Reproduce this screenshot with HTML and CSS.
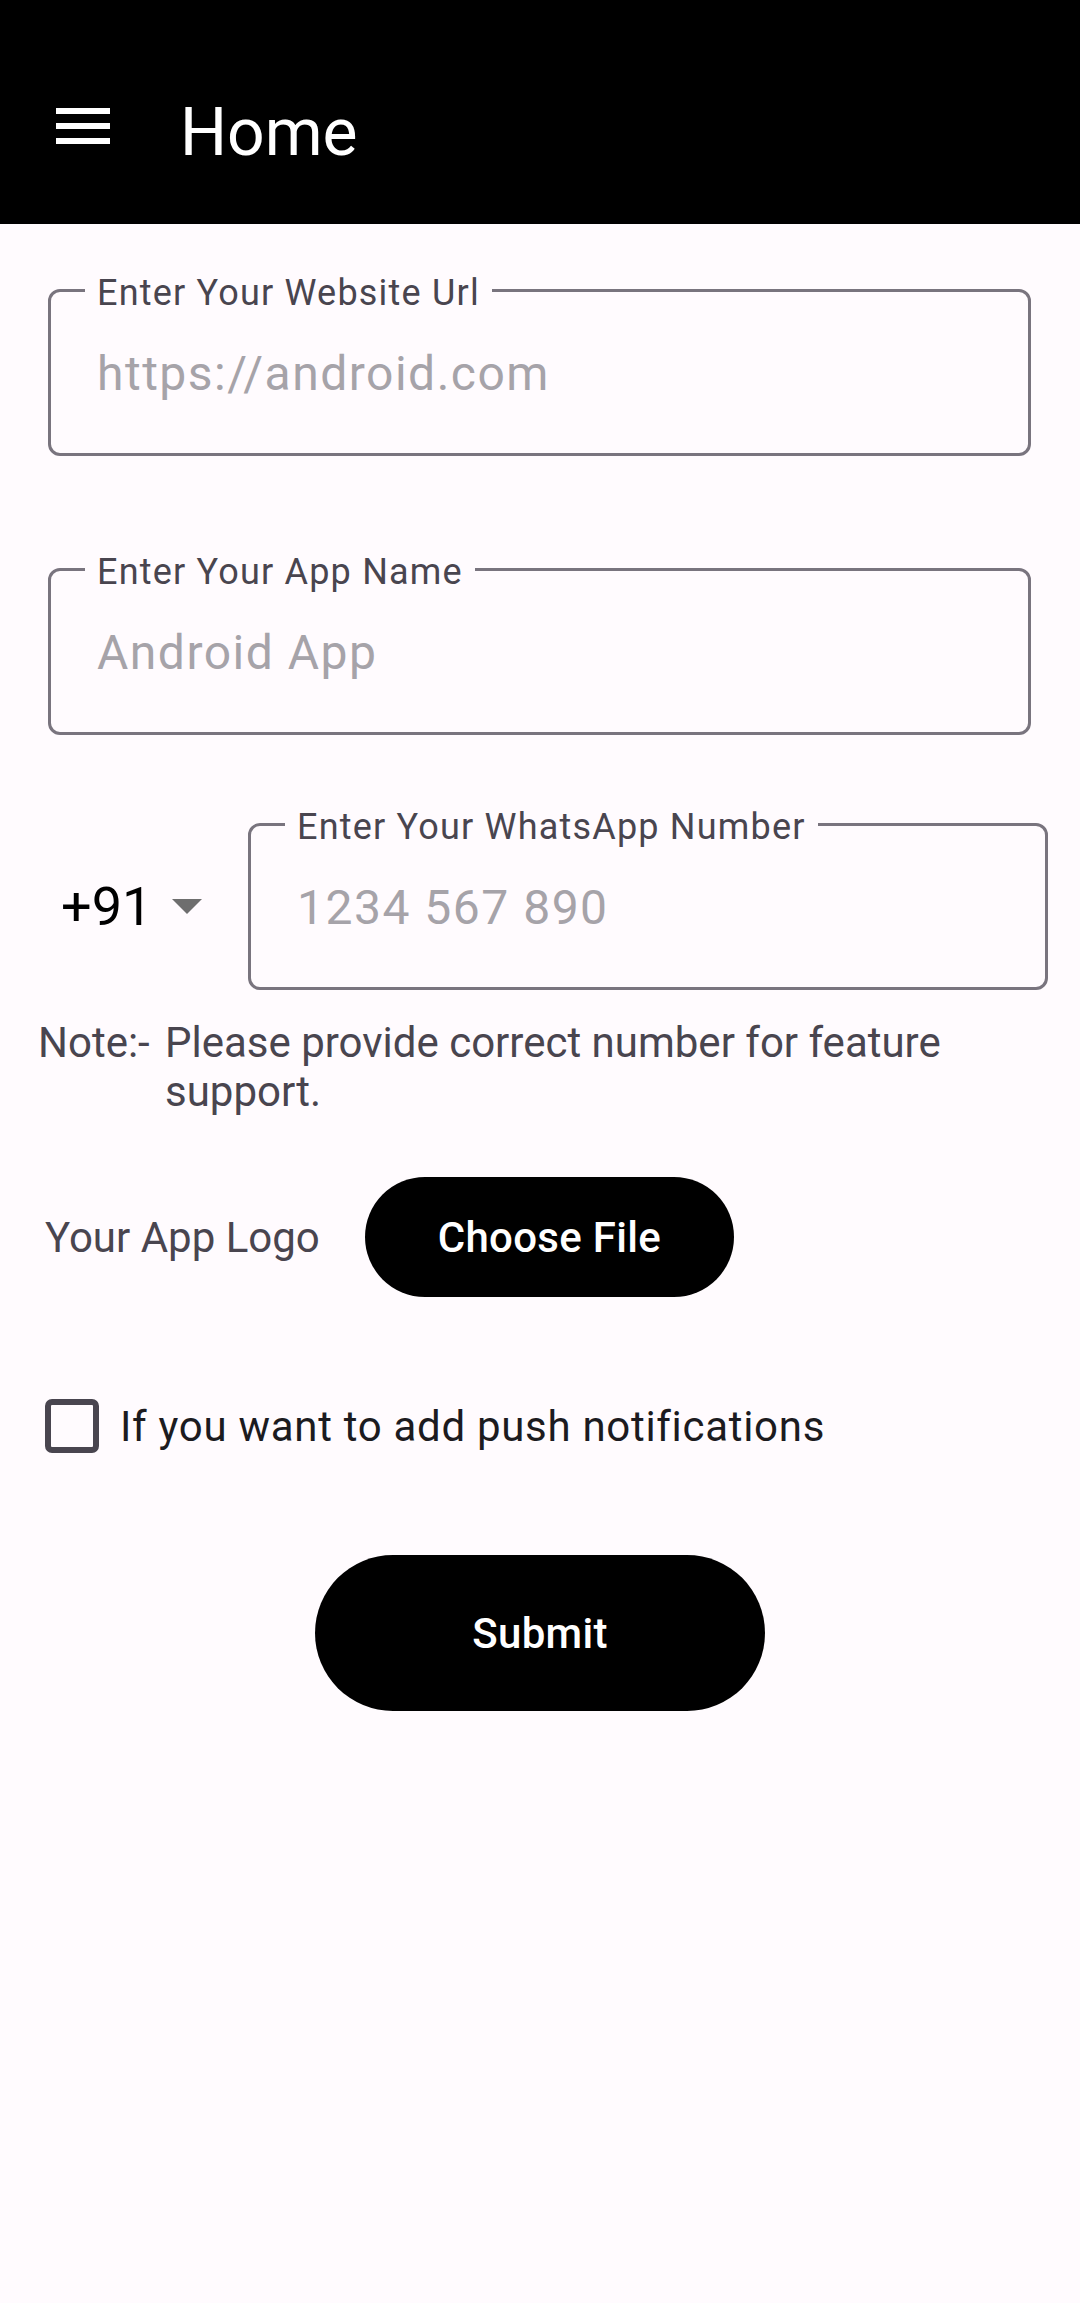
FILE: index.html
```html
<!DOCTYPE html>
<html lang="en">
<head>
<meta charset="utf-8">
<title>Home</title>
<link rel="stylesheet" href="styles.css">
</head>
<body>
<header class="appbar">
  <svg class="menu-icon" viewBox="0 0 24 24" aria-hidden="true"><path d="M3 18h18v-2H3v2zm0-5h18v-2H3v2zm0-7v2h18V6H3z" fill="#ffffff"/></svg>
  <h1 class="title">Home</h1>
</header>
<main class="form">
  <div class="field field-full">
    <span class="field-label">Enter Your Website Url</span>
    <span class="placeholder">https://android.com</span>
  </div>
  <div class="field field-full field-gap">
    <span class="field-label">Enter Your App Name</span>
    <span class="placeholder">Android App</span>
  </div>
  <div class="phone-row">
    <div class="spinner">
      <span class="code">+91</span>
      <svg class="arrow" viewBox="0 0 30 15" aria-hidden="true"><path d="M0 0h30L15 15z" fill="#6e6e6e"/></svg>
    </div>
    <div class="field field-phone">
      <span class="field-label">Enter Your WhatsApp Number</span>
      <span class="placeholder">1234 567 890</span>
    </div>
  </div>
  <div class="note">
    <span class="note-key">Note:-</span>
    <span class="note-text">Please provide correct number for feature support.</span>
  </div>
  <div class="logo-row">
    <span class="logo-label">Your App Logo</span>
    <button class="pill-btn choose-btn" type="button">Choose File</button>
  </div>
  <label class="check-row">
    <span class="checkbox"></span>
    <span class="check-text">If you want to add push notifications</span>
  </label>
  <div class="submit-wrap">
    <button class="pill-btn submit-btn" type="button">Submit</button>
  </div>
</main>
</body>
</html>
```
FILE: styles.css
```css
html, body {
  margin: 0;
  padding: 0;
  background: #FFFBFE;
}
body {
  min-height: 2303px;
  font-family: Roboto, "Noto Sans", "Liberation Sans", sans-serif;
}
.appbar {
  height: 224px;
  background: #000;
  display: flex;
  align-items: flex-start;
}
.menu-icon {
  width: 72px;
  height: 72px;
  margin: 90px 0 0 47px;
  flex: none;
}
.title {
  margin: 94px 0 0 61px;
  font-size: 66px;
  line-height: 77px;
  font-weight: 400;
  color: #fff;
}
.form {
  display: flex;
  flex-direction: column;
}
.field {
  position: relative;
  box-sizing: border-box;
  height: 167px;
  border: 3px solid #79747E;
  border-radius: 12px;
  display: flex;
  align-items: center;
  padding: 2px 0 0 46px;
}
.field-full {
  margin: 65px 49px 0 48px;
}
.field-gap {
  margin-top: 112px;
}
.field-label {
  position: absolute;
  left: 34px;
  top: -17px;
  padding: 0 12px 0 12px;
  background: #FFFBFE;
  font-size: 36px;
  line-height: 36px;
  letter-spacing: 1.2px;
  color: #49454F;
  white-space: nowrap;
}
.placeholder {
  font-size: 48px;
  letter-spacing: 1.5px;
  color: #A6A3A9;
}
.phone-row {
  display: flex;
  align-items: center;
  margin-top: 88px;
  padding: 0 32px 0 61px;
}
.spinner {
  display: flex;
  align-items: center;
  justify-content: space-between;
  width: 141px;
  flex: none;
}
.code {
  font-size: 54px;
  color: #000;
}
.arrow {
  width: 30px;
  height: 15px;
}
.field-phone {
  flex: 1;
  margin-left: 46px;
}
.note {
  display: flex;
  margin-top: 28px;
  padding: 0 40px 0 38px;
  font-size: 42px;
  line-height: 49px;
  color: #49454F;
}
.note-key {
  width: 127px;
  flex: none;
}
.logo-row {
  display: flex;
  align-items: center;
  margin-top: 61px;
  padding-left: 45px;
}
.logo-label {
  font-size: 42px;
  color: #49454F;
}
.pill-btn {
  border: none;
  background: #000;
  color: #fff;
  font-family: Roboto, "Noto Sans", "Liberation Sans", sans-serif;
  font-weight: 500;
  font-size: 42px;
  letter-spacing: 0.3px;
  padding: 0;
  cursor: pointer;
}
.choose-btn {
  height: 120px;
  border-radius: 60px;
  padding: 0 73px;
  margin-left: 45px;
}
.check-row {
  display: flex;
  align-items: center;
  margin-top: 102px;
  padding-left: 45px;
  height: 54px;
}
.checkbox {
  box-sizing: border-box;
  width: 54px;
  height: 54px;
  border: 6px solid #49454F;
  border-radius: 7px;
  flex: none;
}
.check-text {
  margin-left: 21px;
  font-size: 42px;
  letter-spacing: 0.7px;
  color: #1C1B1F;
}
.submit-wrap {
  display: flex;
  justify-content: center;
  margin-top: 102px;
}
.submit-btn {
  width: 450px;
  height: 156px;
  border-radius: 78px;
}
```
